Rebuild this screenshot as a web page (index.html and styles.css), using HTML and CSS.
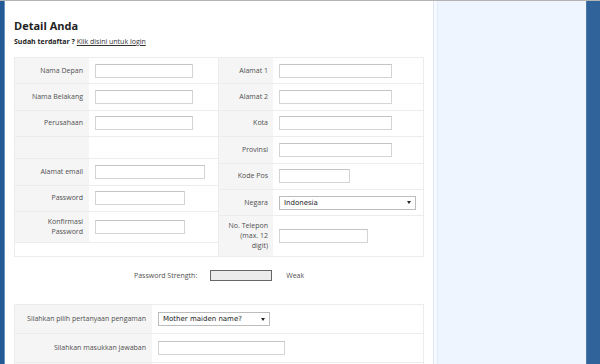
FILE: index.html
```html
<!DOCTYPE html>
<html lang="id">
<head>
  <meta charset="UTF-8" />
  <title>Detail Anda</title>
  <link rel="stylesheet" href="styles.css">
</head>
<body>
  <div class="edge-left"></div>

  <main class="content">
    <h1>Detail Anda</h1>
    <p class="login-note">Sudah terdaftar ? <a href="#">Klik disini untuk login</a></p>

    <div class="form-top">
      <div class="block block-left">
        <div class="row"><label>Nama Depan</label><div class="field"><input type="text" class="w98"></div></div>
        <div class="row"><label>Nama Belakang</label><div class="field"><input type="text" class="w98"></div></div>
        <div class="row"><label>Perusahaan</label><div class="field"><input type="text" class="w98"></div></div>
        <div class="row row-empty"><label></label><div class="field"></div></div>
        <div class="row"><label>Alamat email</label><div class="field"><input type="text" class="w110"></div></div>
        <div class="row"><label>Password</label><div class="field"><input type="password" class="w90"></div></div>
        <div class="row"><label>Konfirmasi<br>Password</label><div class="field"><input type="password" class="w90"></div></div>
      </div>
      <div class="block block-right">
        <div class="row"><label>Alamat 1</label><div class="field"><input type="text" class="w113"></div></div>
        <div class="row"><label>Alamat 2</label><div class="field"><input type="text" class="w113"></div></div>
        <div class="row"><label>Kota</label><div class="field"><input type="text" class="w113"></div></div>
        <div class="row"><label>Provinsi</label><div class="field"><input type="text" class="w113"></div></div>
        <div class="row"><label>Kode Pos</label><div class="field"><input type="text" class="w71"></div></div>
        <div class="row"><label>Negara</label><div class="field"><div class="select w137"><span>Indonesia</span><i></i></div></div></div>
        <div class="row"><label>No. Telepon<br>(max. 12<br>digit)</label><div class="field"><input type="text" class="w89"></div></div>
      </div>
    </div>

    <div class="strength">
      <span class="strength-label">Password Strength:</span>
      <span class="strength-bar"></span>
      <span class="strength-value">Weak</span>
    </div>

    <div class="form-bottom">
      <div class="row"><label>Silahkan pilih pertanyaan pengaman</label><div class="field"><div class="select w112"><span>Mother maiden name?</span><i></i></div></div></div>
      <div class="row"><label>Silahkan masukkan jawaban</label><div class="field"><input type="text" class="w127"></div></div>
      <div class="row"><label></label><div class="field"></div></div>
    </div>
  </main>

  <aside class="aside"></aside>
  <div class="edge-right"></div>
</body>
</html>
```

FILE: styles.css
```css
* {
  box-sizing: border-box;
}
html, body {
  margin: 0;
  padding: 0;
  height: 100%;
}
body {
  display: flex;
  border-top: 1px solid #b4b4b4;
  font-family: "Open Sans", "Noto Sans", sans-serif;
  color: #505050;
  overflow: hidden;
}
.edge-left {
  width: 5px;
  background: #225a96;
  border-right: 1px solid #6d93bd;
}
.content {
  width: 428px;
  background: #fff;
  padding: 15px 0 0 9px;
}
.aside {
  width: 153px;
  background: #eef5fe;
  border-left: 1px solid #dbe7f6;
  box-shadow: inset 3px 0 0 #f6faff, inset 4px 0 0 #e2ecf8;
}
.edge-right {
  width: 14px;
  background: #2f6399;
  border-left: 1px solid #4a79aa;
}

h1 {
  margin: 0;
  font-size: 11px;
  font-weight: 700;
  color: #222;
  line-height: 20px;
}
.login-note {
  margin: 0 0 9px;
  font-size: 7px;
  font-weight: 700;
  color: #222;
  line-height: 12px;
}
.login-note a {
  font-weight: 400;
  color: #333;
}

/* rows */
.row {
  display: flex;
  border-bottom: 1px solid #ececec;
  font-size: 7px;
  line-height: 10px;
  white-space: nowrap;
}
.row label {
  flex: none;
  background: #f5f5f5;
  text-align: right;
  padding: 5px 6px 5px 2px;
  min-height: 25.4px;
  display: flex;
  align-items: center;
  justify-content: flex-end;
}
.row .field {
  flex: 1;
  display: flex;
  align-items: center;
  padding-left: 6px;
}
.row-empty label {
  min-height: 21px;
}

input {
  height: 14px;
  border: 1px solid #d4d4d4;
  border-top-color: #c4c4c4;
  background: #fff;
  padding: 0;
  margin: 0;
}
.w71 { width: 71px; }
.w89 { width: 89px; }
.w90 { width: 90px; }
.w98 { width: 98px; }
.w110 { width: 110px; }
.w112 { width: 112px; }
.w113 { width: 113px; }
.w127 { width: 127px; }
.w137 { width: 137px; }

.select {
  height: 14px;
  border: 1px solid #bdbdbd;
  background: #fff;
  display: flex;
  align-items: center;
  justify-content: space-between;
  padding: 0 4px 0 4px;
  font-family: "DejaVu Sans", Verdana, sans-serif;
  font-size: 7px;
  color: #222;
}
.select i {
  width: 0;
  height: 0;
  border-left: 2.5px solid transparent;
  border-right: 2.5px solid transparent;
  border-top: 3px solid #222;
}

.form-top {
  display: flex;
  width: 410px;
  border: 1px solid #ececec;
}
.block {
  width: 205px;
}
.block-left {
  border-right: 1px solid #ececec;
}
.block-left label {
  width: 74px;
}
.block-left .row:last-child label {
  min-height: 30px;
}
.block-right label {
  width: 54px;
  padding-right: 5px;
}
.block-right .row:last-child {
  border-bottom: none;
}
.block-right .row:last-child label {
  min-height: 40px;
}

.strength {
  display: flex;
  align-items: center;
  height: 36px;
  padding-left: 120px;
  font-size: 7px;
}
.strength-bar {
  width: 62px;
  height: 11px;
  margin: 0 14px 0 13px;
  border: 1px solid #666;
  background: #ececec;
}

.form-bottom {
  margin-top: 11px;
  width: 410px;
  border: 1px solid #ececec;
  border-bottom: none;
}
.form-bottom label {
  width: 137px;
}
.form-bottom .row label {
  min-height: 28px;
}
```
